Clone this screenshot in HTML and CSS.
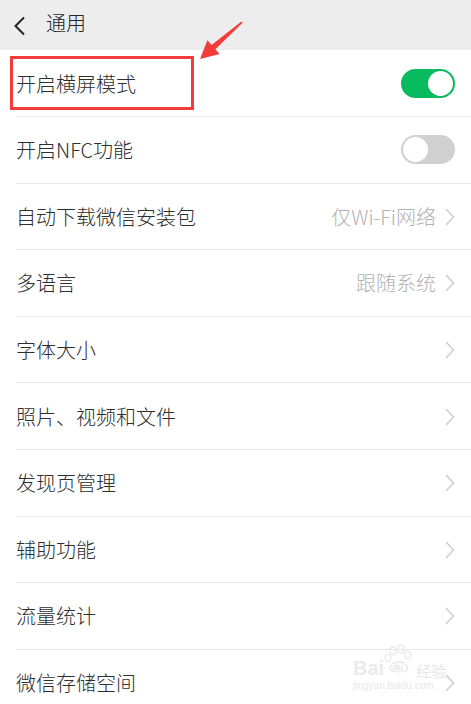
FILE: index.html
```html
<!DOCTYPE html>
<html lang="zh-CN">
<head>
    <meta charset="UTF-8">
    <meta name="viewport" content="width=device-width, initial-scale=1.0">
    <title>通用</title>
    <link rel="stylesheet" href="styles.css">
</head>
<body>
    <div class="page">
        <div class="header">
            <svg class="back" width="14" height="20" viewBox="0 0 14 20">
                <polyline points="11,1.5 2.5,10 11,18.5" fill="none" stroke="#222" stroke-width="2"/>
            </svg>
            <span class="title">通用</span>
        </div>

        <ul class="list">
            <li class="row">
                <span class="label">开启横屏模式</span>
                <span class="switch on"><span class="knob"></span></span>
            </li>
            <li class="row">
                <span class="label">开启NFC功能</span>
                <span class="switch"><span class="knob"></span></span>
            </li>
            <li class="row">
                <span class="label">自动下载微信安装包</span>
                <span class="value">仅Wi-Fi网络</span>
                <svg class="arrow" width="10" height="18" viewBox="0 0 10 18"><polyline points="1,1 8.5,9 1,17" fill="none" stroke="#cbcbcb" stroke-width="1.4"/></svg>
            </li>
            <li class="row">
                <span class="label">多语言</span>
                <span class="value">跟随系统</span>
                <svg class="arrow" width="10" height="18" viewBox="0 0 10 18"><polyline points="1,1 8.5,9 1,17" fill="none" stroke="#cbcbcb" stroke-width="1.4"/></svg>
            </li>
            <li class="row">
                <span class="label">字体大小</span>
                <svg class="arrow" width="10" height="18" viewBox="0 0 10 18"><polyline points="1,1 8.5,9 1,17" fill="none" stroke="#cbcbcb" stroke-width="1.4"/></svg>
            </li>
            <li class="row">
                <span class="label">照片、视频和文件</span>
                <svg class="arrow" width="10" height="18" viewBox="0 0 10 18"><polyline points="1,1 8.5,9 1,17" fill="none" stroke="#cbcbcb" stroke-width="1.4"/></svg>
            </li>
            <li class="row">
                <span class="label">发现页管理</span>
                <svg class="arrow" width="10" height="18" viewBox="0 0 10 18"><polyline points="1,1 8.5,9 1,17" fill="none" stroke="#cbcbcb" stroke-width="1.4"/></svg>
            </li>
            <li class="row">
                <span class="label">辅助功能</span>
                <svg class="arrow" width="10" height="18" viewBox="0 0 10 18"><polyline points="1,1 8.5,9 1,17" fill="none" stroke="#cbcbcb" stroke-width="1.4"/></svg>
            </li>
            <li class="row">
                <span class="label">流量统计</span>
                <svg class="arrow" width="10" height="18" viewBox="0 0 10 18"><polyline points="1,1 8.5,9 1,17" fill="none" stroke="#cbcbcb" stroke-width="1.4"/></svg>
            </li>
            <li class="row">
                <span class="label">微信存储空间</span>
                <svg class="arrow" width="10" height="18" viewBox="0 0 10 18"><polyline points="1,1 8.5,9 1,17" fill="none" stroke="#cbcbcb" stroke-width="1.4"/></svg>
            </li>
        </ul>

        <!-- annotation drawn over the screenshot -->
        <div class="highlight"></div>
        <svg class="pointer" width="471" height="704" viewBox="0 0 471 704">
            <polygon points="242.8,22.6 215.4,49.2 219.6,54 200,59 207.4,40.2 211.6,45 241.4,21.4" fill="#f23c3c"/>
        </svg>

        <div class="watermark">
            <div class="wm-top">
                <span class="wm-bai">Bai</span>
                <span class="wm-paw">
                    <svg width="30" height="30" viewBox="0 0 30 30">
                        <g fill="none" stroke="#e6e6e6" stroke-width="1.2">
                            <ellipse cx="9" cy="7" rx="3" ry="4"/>
                            <ellipse cx="17" cy="5" rx="3" ry="4"/>
                            <ellipse cx="24" cy="11" rx="3" ry="3.5"/>
                            <ellipse cx="4" cy="14" rx="3" ry="3.5"/>
                            <path d="M6,25 C6,16 22,15 24,25 C22,29 8,29 6,25 Z"/>
                        </g>
                        <text x="9" y="26" font-size="9" fill="#dedede" font-family="Liberation Sans, sans-serif">du</text>
                    </svg>
                </span>
                <span class="wm-jy">经验</span>
            </div>
            <div class="wm-url">jingyan.baidu.com</div>
        </div>
    </div>
</body>
</html>
```

FILE: styles.css
```css
body {
    margin: 0;
    padding: 0;
    background-color: #fff;
    font-family: "Noto Sans CJK SC", "Noto Sans", sans-serif;
    color: #333;
}

.page {
    position: relative;
    width: 471px;
    height: 704px;
    overflow: hidden;
}

.header {
    height: 50px;
    background-color: #ededed;
    display: flex;
    align-items: center;
    padding-left: 13px;
    box-sizing: border-box;
}

.back {
    margin-top: 1px;
}

.title {
    font-size: 20px;
    font-weight: 300;
    margin-left: 19px;
    color: #222;
    line-height: 1;
    margin-top: -4px;
}

.list {
    list-style: none;
    margin: 0;
    padding: 0;
}

.row {
    display: flex;
    align-items: center;
    height: 66.6px;
    box-sizing: border-box;
    margin-left: 16px;
    padding-right: 16px;
    border-bottom: 1px solid #e8e8e8;
}

.row:first-child {
    height: 67px;
}

.label {
    flex: 1;
    font-size: 20px;
    font-weight: 300;
    color: #2e2e2e;
    line-height: 1;
    margin-top: 1px;
}

.value {
    font-size: 20px;
    font-weight: 300;
    color: #b2b2b2;
    line-height: 1;
    margin-right: 9px;
    margin-top: 1px;
}

.arrow {
    display: block;
    margin-top: 1px;
}

.switch {
    position: relative;
    width: 54px;
    height: 29px;
    border-radius: 15px;
    background-color: #d0d0d0;
    box-sizing: border-box;
}

.switch .knob {
    position: absolute;
    top: 2px;
    left: 2px;
    width: 25px;
    height: 25px;
    border-radius: 50%;
    background-color: #fff;
}

.switch.on {
    background-color: #09bb5f;
}

.switch.on .knob {
    left: 27px;
}

.highlight {
    position: absolute;
    left: 10px;
    top: 56px;
    width: 184px;
    height: 54px;
    border: 3px solid #f23c3c;
    box-sizing: border-box;
}

.pointer {
    position: absolute;
    left: 0;
    top: 0;
}

.watermark {
    position: absolute;
    left: 353px;
    top: 650px;
    color: #e8e8e8;
    font-family: "Liberation Sans", sans-serif;
}

.wm-top {
    display: flex;
    align-items: flex-end;
    height: 28px;
}

.wm-bai {
    font-size: 20px;
    font-weight: bold;
    line-height: 1;
    color: #ebebeb;
}

.wm-paw {
    margin-top: -8px;
}

.wm-jy {
    font-family: "Noto Sans CJK SC", sans-serif;
    font-size: 15px;
    line-height: 1;
    margin-left: 2px;
    color: #e6e6e6;
}

.wm-url {
    font-size: 10px;
    color: #e8e8e8;
    margin-top: 2px;
}
```
